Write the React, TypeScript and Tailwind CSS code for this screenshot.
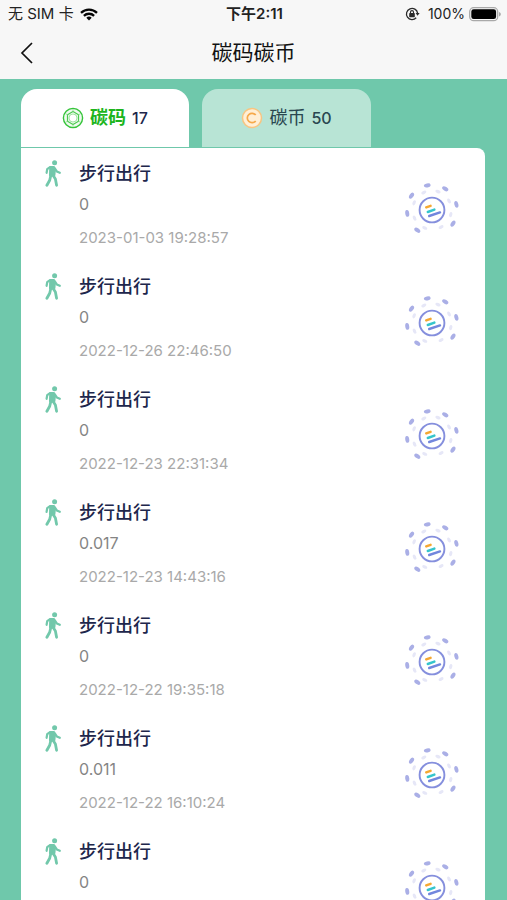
import { useState } from "react";

type RecordItem = { title: string; value: string; time?: string };

const records: RecordItem[] = [
  { title: "步行出行", value: "0", time: "2023-01-03 19:28:57" },
  { title: "步行出行", value: "0", time: "2022-12-26 22:46:50" },
  { title: "步行出行", value: "0", time: "2022-12-23 22:31:34" },
  { title: "步行出行", value: "0.017", time: "2022-12-23 14:43:16" },
  { title: "步行出行", value: "0", time: "2022-12-22 19:35:18" },
  { title: "步行出行", value: "0.011", time: "2022-12-22 16:10:24" },
  { title: "步行出行", value: "0" },
];

function WifiIcon() {
  return (
    <svg width="18" height="13" viewBox="0 0 18 13" fill="none" stroke="#050505" strokeWidth="2.3" aria-hidden="true">
      <path d="M1 4.8a11.6 11.6 0 0 1 16 0" />
      <path d="M3.9 7.8a7.4 7.4 0 0 1 10.2 0" />
      <path d="M9 12.5 6.3 9.8a3.9 3.9 0 0 1 5.4 0Z" fill="#050505" stroke="none" />
    </svg>
  );
}

function RotationLockIcon() {
  return (
    <svg width="15" height="14" viewBox="0 0 15 14" fill="none" stroke="#2a2a2a" aria-hidden="true">
      <path d="M11.2 10.8A5.6 5.6 0 1 1 12.6 6.2" strokeWidth="1.3" />
      <path d="M10.6 6h4l-2 2.8Z" fill="#2a2a2a" stroke="none" />
      <rect x="4.2" y="6.1" width="5.6" height="4.1" rx="0.6" fill="#2a2a2a" stroke="none" />
      <path d="M5.5 6.5V5.1a1.5 1.5 0 0 1 3 0v1.4" strokeWidth="1.1" />
    </svg>
  );
}

function BatteryIcon() {
  return (
    <svg width="32" height="15" viewBox="0 0 32 15" aria-hidden="true">
      <rect x="0.7" y="0.7" width="28" height="13" rx="4" fill="#f7f7f7" stroke="#a9a9a9" strokeWidth="1.3" />
      <rect x="2.3" y="2.3" width="24.8" height="9.8" rx="2.4" fill="#000" />
      <path d="M30 5v4.6c1.4-.5 1.8-1.3 1.8-2.3S31.4 5.5 30 5Z" fill="#a9a9a9" />
    </svg>
  );
}

function CodeIcon() {
  return (
    <svg width="22" height="22" viewBox="0 0 22 22" fill="none" stroke="#35c43a" aria-hidden="true">
      <circle cx="11" cy="11" r="9.6" strokeWidth="1.4" fill="#effbef" />
      <path d="M11 4.6 16.5 7.8v6.4L11 17.4 5.500 14.2V7.8Z" strokeWidth="1.2" stroke="#4cca50" strokeLinejoin="round" />
      <circle cx="11" cy="11" r="4" strokeWidth="0.8" stroke="#8edc90" fill="#fff" />
      <path d="M11 2v2.600M11 17.400V20M3.200 6.500l2.300 1.300M16.500 14.200l2.300 1.300M3.200 15.500l2.300-1.300M16.500 7.800l2.300-1.300" strokeWidth="0.8" stroke="#8edc90" />
    </svg>
  );
}

function CoinIcon() {
  return (
    <svg width="22" height="22" viewBox="0 0 22 22" fill="none" aria-hidden="true">
      <circle cx="11" cy="11" r="9.5" fill="#ffefd6" stroke="#f8c581" strokeWidth="1.5" />
      <path d="M14.7 8.1a4.7 4.7 0 1 0 0 5.8" stroke="#f6a94a" strokeWidth="1.7" />
    </svg>
  );
}

function WalkIcon() {
  return (
    <svg width="16" height="27" viewBox="0 0 16 27" fill="none" stroke="#72c8ab" strokeLinecap="round" strokeLinejoin="round" aria-hidden="true">
      <circle cx="9.6" cy="2.8" r="2.5" fill="#72c8ab" stroke="none" />
      <path d="M5.6 7.4h3.2l.8 1.800-.6 6H5.400Z" fill="#72c8ab" strokeWidth="2.8" />
      <path d="M5 7.2 2.200 9.200 1.600 12.800" strokeWidth="2.2" />
      <path d="m10 8.600 1.800 2.800 3 1.400" strokeWidth="2.200" />
      <path d="M5.800 15.500 4.700 20.300 1.900 25.300" strokeWidth="2.800" />
      <path d="m8 15.300 2.400 3.700 1.200 6.300" strokeWidth="2.800" />
    </svg>
  );
}

const outerLeaves = [-101, -58, -13, 33, 126, 172, 215];
const innerLeaves = [-115, -72, -28, 14, 62, 112, 155, 202];

function Emblem() {
  return (
    <svg width="56" height="56" viewBox="-28 -28 56 56" fill="none" aria-hidden="true">
      {outerLeaves.map((angle) => (
        <ellipse key={angle} cx="25" cy="0" rx="2" ry="3.4" transform={`rotate(${angle})`} fill="#aaafe6" />
      ))}
      {innerLeaves.map((angle) => (
        <ellipse key={angle} cx="19.3" cy="0" rx="1.6" ry="2.7" transform={`rotate(${angle})`} fill="#e6e7f7" />
      ))}
      <circle r="12.4" fill="#fff" stroke="#858fdd" strokeWidth="1.9" />
      <g strokeWidth="2.4" strokeLinecap="round">
        <path d="m-5.800-2.600 4.400-1.600" stroke="#f5a832" />
        <path d="m-4.200 2 6.600-2.400" stroke="#35c5cc" />
        <path d="m-2.800 6 10.800-3.600" stroke="#7286dd" />
      </g>
    </svg>
  );
}

function RecordRow({ item }: { item: RecordItem }) {
  return (
    <li className="flex h-[113px] items-start pt-3 pr-[25px] pl-6">
      <div className="flex w-[34px] shrink-0">
        <WalkIcon />
      </div>
      <div className="min-w-0 flex-1">
        <h2 className="text-lg/7 font-medium text-[#20264b]">{item.title}</h2>
        <p className="mt-1 text-base/6 text-[#858585]">{item.value}</p>
        {item.time && <time className="mt-[10px] block text-[15px]/6 text-[#a9a9a9]">{item.time}</time>}
      </div>
      <div className="mt-[22px] shrink-0">
        <Emblem />
      </div>
    </li>
  );
}

export default function App() {
  const [tab, setTab] = useState<"code" | "coin">("code");
  const active = "bg-white";
  const inactive = "bg-[#b8e4d5]";
  return (
    <div className="flex h-screen flex-col overflow-hidden bg-[#6fc8ab] font-[Inter,'Noto_Sans_CJK_SC',sans-serif]">
      <header className="shrink-0 bg-[#f7f7f7]">
        <div className="grid h-7 grid-cols-3 items-center pr-[6px] pl-2 text-[15px] text-[#222]">
          <div className="flex items-center gap-[6px]">
            <span>无 SIM 卡</span>
            <WifiIcon />
          </div>
          <span className="text-center font-semibold">下午2:11</span>
          <div className="flex items-center justify-end gap-1 text-sm">
            <RotationLockIcon />
            <span className="ml-1">100%</span>
            <BatteryIcon />
          </div>
        </div>
        <div className="grid h-[51px] grid-cols-[56px_1fr_56px] items-center pb-[2px]">
          <button type="button" aria-label="返回" className="flex pl-5">
            <svg width="13" height="22" viewBox="0 0 13 22" fill="none" stroke="#111" strokeWidth="1.7" aria-hidden="true">
              <path d="M12 1 2 11l10 10" />
            </svg>
          </button>
          <h1 className="text-center text-[21px]/7 text-[#111]">碳码碳币</h1>
        </div>
      </header>
      <main className="flex min-h-0 flex-1 flex-col pt-[10px] pr-[22px] pl-[21px]">
        <div role="tablist" className="flex shrink-0 gap-[13px] pb-px">
          <button
            type="button"
            role="tab"
            aria-selected={tab === "code"}
            onClick={() => setTab("code")}
            className={`flex h-[58px] w-[168px] items-center justify-center gap-[6px] rounded-t-2xl text-base text-[#20264b] ${tab === "code" ? active : inactive}`}
          >
            <CodeIcon />
            <span className="text-lg font-bold text-[#1db51d]">碳码</span>
            <span className="font-medium">17</span>
          </button>
          <button
            type="button"
            role="tab"
            aria-selected={tab === "coin"}
            onClick={() => setTab("coin")}
            className={`flex h-[58px] w-[169px] items-center justify-center gap-[6px] rounded-t-2xl text-base text-[#294750] ${tab === "coin" ? active : inactive}`}
          >
            <CoinIcon />
            <span className="text-lg">碳币</span>
            <span className="font-medium">50</span>
          </button>
        </div>
        <ul className="min-h-0 flex-1 overflow-hidden rounded-tr-lg bg-white">
          {records.map((item, index) => (
            <RecordRow key={index} item={item} />
          ))}
        </ul>
      </main>
    </div>
  );
}
